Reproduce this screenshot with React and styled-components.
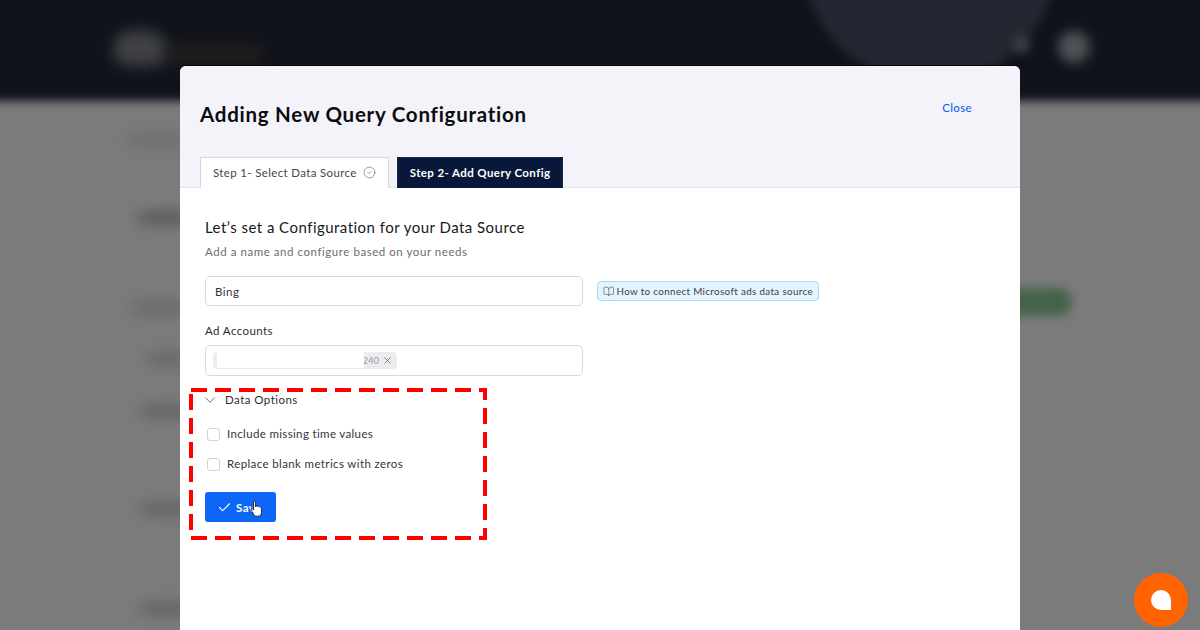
import React from "react";
import styled, { createGlobalStyle } from "styled-components";
import { Check, ChevronDown, CircleCheck, X, BookOpen } from "lucide-react";

const Global = createGlobalStyle`
  html, body { margin: 0; padding: 0; width: 1200px; height: 630px; overflow: hidden; background: #7b7b7b; }
  * { box-sizing: border-box; }
  body { font-family: "Lato", "Noto Sans", sans-serif; }
`;

const Page = styled.div`
  position: relative;
  width: 1200px;
  height: 630px;
  overflow: hidden;
  padding-top: 66px;
  display: flex;
  justify-content: center;
  background: #7b7b7b;
`;

const Backdrop = styled.div`
  position: absolute;
  inset: 0;
  overflow: hidden;
`;

const TopBand = styled.div`
  position: absolute;
  left: -20px;
  right: -20px;
  top: -20px;
  height: 121px;
  background: #10131b;
  filter: blur(4px);
`;

const Blob = styled.div`
  position: absolute;
  left: ${(p) => p.$x}px;
  top: ${(p) => p.$y}px;
  width: ${(p) => p.$w}px;
  height: ${(p) => p.$h}px;
  background: ${(p) => p.$c};
  border-radius: ${(p) => p.$r || "50%"};
  filter: blur(${(p) => p.$b || 6}px);
`;

const Modal = styled.div`
  position: relative;
  width: 840px;
  height: 600px;
  flex: none;
  background: #fff;
  border-radius: 6px 6px 0 0;
  box-shadow: 0 -1px 0 #05070c;
  overflow: hidden;
`;

const Header = styled.header`
  height: 122px;
  background: #f3f3f9;
  border-bottom: 1px solid #e4e4ec;
  padding: 0 48px 0 20px;
  display: flex;
  flex-direction: column;
`;

const HeaderRow = styled.div`
  display: flex;
  justify-content: space-between;
  align-items: flex-start;
  height: 91px;
  flex: none;
`;

const Title = styled.h1`
  margin: 35px 0 0;
  font-size: 20.5px;
  line-height: 26px;
  font-weight: 700;
  color: #0c0c10;
  letter-spacing: 0.75px;
`;

const CloseLink = styled.a`
  margin-top: 34px;
  font-size: 11.5px;
  line-height: 16px;
  font-weight: 500;
  color: #1463f0;
  letter-spacing: 0.35px;
`;

const Tabs = styled.div`
  display: flex;
  gap: 8px;
  height: 31px;
  flex: none;
`;

const Tab = styled.div`
  display: flex;
  align-items: center;
  gap: 6px;
  height: 31px;
  padding: 0 12px 2px;
  font-size: 11.5px;
  letter-spacing: ${(p) => (p.$active ? "0.4px" : "0.35px")};
  font-weight: ${(p) => (p.$active ? 700 : 400)};
  color: ${(p) => (p.$active ? "#fff" : "#44464c")};
  background: ${(p) => (p.$active ? "#07183a" : "#fff")};
  border: 1px solid ${(p) => (p.$active ? "#1b2a4a" : "#d6d6de")};
  border-bottom: none;
`;

const Body = styled.div`
  padding: 30px 25px 0;
  display: flex;
  flex-direction: column;
  align-items: flex-start;
`;

const Heading = styled.h2`
  margin: 0;
  font-size: 15px;
  line-height: 18px;
  font-weight: 400;
  color: #17181c;
  letter-spacing: 0.47px;
`;

const Sub = styled.p`
  margin: 8px 0 0;
  font-size: 11.5px;
  line-height: 16px;
  color: #6b6c72;
  letter-spacing: 0.55px;
`;

const FieldRow = styled.div`
  margin-top: 16px;
  display: flex;
  align-items: center;
  gap: 14px;
`;

const Field = styled.div`
  position: relative;
  width: 378px;
  height: ${(p) => p.$h || 30}px;
  border: 1px solid #d8d8de;
  border-radius: 5px;
  background: #fff;
  display: flex;
  align-items: center;
  padding: 0 ${(p) => p.$pad || 9}px;
  font-size: 11.5px;
  color: #33343a;
  letter-spacing: 0.5px;
`;

const Badge = styled.a`
  width: 222px;
  height: 20px;
  display: flex;
  align-items: center;
  gap: 2px;
  padding: 0 5px;
  background: #e3f4fe;
  border: 1px solid #a9dafb;
  border-radius: 4px;
  font-size: 9.8px;
  color: #3c3e44;
  letter-spacing: 0.36px;
  white-space: nowrap;
`;

const Label = styled.label`
  margin: 17px 0 0;
  font-size: 11.5px;
  line-height: 15px;
  color: #2c2d32;
  letter-spacing: 0.4px;
`;

const SelectField = styled(Field)`
  margin-top: 7px;
`;

const Chip = styled.div`
  position: relative;
  width: 184px;
  height: 17px;
  background: #ececef;
  border-radius: 4px;
  display: flex;
  align-items: center;
  justify-content: flex-end;
  gap: 3px;
  padding-right: 4px;
  font-size: 9.500px;
  letter-spacing: 0;
  color: #9a9ba0;
`;

const ChipMask = styled.div`
  position: absolute;
  left: 4px;
  top: 0;
  bottom: 1px;
  width: 147px;
  background: #fff;
`;

const Accordion = styled.div`
  margin-top: 15px;
  display: flex;
  align-items: center;
  gap: 6px;
  font-size: 11.5px;
  line-height: 18px;
  color: #2c2d32;
  letter-spacing: 0.45px;
  svg { color: #55565c; margin-left: -4px; }
`;

const CheckRow = styled.div`
  margin-top: ${(p) => p.$mt}px;
  display: flex;
  align-items: center;
  gap: 7px;
  margin-left: 2px;
  font-size: 11.5px;
  line-height: 16px;
  color: #33343a;
  letter-spacing: ${(p) => p.$ls}px;
`;

const Box = styled.span`
  width: 13px;
  height: 13px;
  border: 1px solid #d2d2d8;
  border-radius: 3px;
  background: #fff;
`;

const SaveButton = styled.button`
  margin-top: 20px;
  width: 71px;
  height: 30px;
  border: none;
  border-radius: 3px;
  background: #0d66f6;
  color: #fff;
  font-family: inherit;
  font-size: 11.5px;
  font-weight: 700;
  letter-spacing: 0.4px;
  display: flex;
  align-items: center;
  gap: 4px;
  padding: 0 0 0 12px;
`;

const HandCursor = styled.svg`
  position: absolute;
  left: 250px;
  top: 500px;
  width: 13px;
  height: 18px;
`;

const Annotation = styled.svg`
  position: absolute;
  left: 187px;
  top: 386px;
  width: 302px;
  height: 156px;
`;

const ChatBubble = styled.div`
  position: absolute;
  left: 1134px;
  top: 573px;
  width: 54px;
  height: 54px;
  border-radius: 50%;
  background: #ff6400;
  display: flex;
  align-items: center;
  justify-content: center;
`;

const ChatGlyph = styled.span`
  width: 20px;
  height: 20px;
  background: #fff;
  border-radius: 50% 50% 0 50%;
`;

export default function App() {
  return (
    <Page>
      <Global />
      <Backdrop>
        <TopBand />
        <Blob $x={802} $y={-172} $w={256} $h={256} $c="#222731" $b={4} />
        <Blob $x={114} $y={30} $w={54} $h={36} $c="#3f4146" $r="40% 50% 30% 30%" $b={7} />
        <Blob $x={165} $y={46} $w={98} $h={18} $c="#241f1d" $r="8px" $b={8} />
        <Blob $x={1058} $y={31} $w={32} $h={32} $c="#505257" $b={6} />
        <Blob $x={1012} $y={34} $w={18} $h={20} $c="#3b3c3e" $b={5} />
        <Blob $x={125} $y={132} $w={70} $h={16} $c="#707070" />
        <Blob $x={135} $y={209} $w={60} $h={18} $c="#606161" />
        <Blob $x={130} $y={298} $w={60} $h={20} $c="#6e6e6e" />
        <Blob $x={145} $y={350} $w={50} $h={18} $c="#6c6c6c" />
        <Blob $x={138} $y={402} $w={60} $h={18} $c="#686868" />
        <Blob $x={138} $y={500} $w={60} $h={18} $c="#686868" />
        <Blob $x={138} $y={600} $w={60} $h={18} $c="#686868" />
        <Blob $x={1000} $y={288} $w={72} $h={28} $c="#46634a" $r="14px" $b={5} />
      </Backdrop>

      <Modal>
        <Header>
          <HeaderRow>
            <Title>Adding New Query Configuration</Title>
            <CloseLink>Close</CloseLink>
          </HeaderRow>
          <Tabs>
            <Tab>
              Step 1- Select Data Source
              <CircleCheck size={13} strokeWidth={1.2} color="#66686e" />
            </Tab>
            <Tab $active>Step 2- Add Query Config</Tab>
          </Tabs>
        </Header>
        <Body>
          <Heading>Let’s set a Configuration for your Data Source</Heading>
          <Sub>Add a name and configure based on your needs</Sub>
          <FieldRow>
            <Field>Bing</Field>
            <Badge>
              <BookOpen size={13} strokeWidth={1.3} color="#55565c" />
              How to connect Microsoft ads data source
            </Badge>
          </FieldRow>
          <Label>Ad Accounts</Label>
          <SelectField $h={31} $pad={7}>
            <Chip>
              <ChipMask />
              240
              <X size={11} strokeWidth={1.5} color="#55565c" />
            </Chip>
          </SelectField>
          <Accordion>
            <ChevronDown size={18} strokeWidth={1.1} />
            Data Options
          </Accordion>
          <CheckRow $mt={17} $ls={0.35}><Box />Include missing time values</CheckRow>
          <CheckRow $mt={14} $ls={0.38}><Box />Replace blank metrics with zeros</CheckRow>
          <SaveButton>
            <Check size={15} strokeWidth={1.7} />
            Save
          </SaveButton>
        </Body>
      </Modal>

      <Annotation viewBox="0 0 302 156">
        <rect x="4" y="4" width="294" height="148" fill="none" stroke="#ff0000" strokeWidth="4" strokeDasharray="16 8" />
      </Annotation>

      <HandCursor viewBox="0 0 13 18">
        <path d="M3.6 1.8c0-1.2 2-1.2 2 0v5l.3-.6c1-.6 1.7-.3 1.9.4.9-.5 1.6-.2 1.8.5 1-.4 1.9.1 1.9 1v4.2c0 2.3-1.2 3.900-3 3.900H6.200c-1.100 0-1.800-.6-2.300-1.500L1.200 10.100c-.7-1.100.6-2 1.500-1.100l.9 1z" fill="#fff" stroke="#1a1a1a" strokeWidth="0.9" strokeLinejoin="round" />
      </HandCursor>

      <ChatBubble>
        <ChatGlyph />
      </ChatBubble>
    </Page>
  );
}
